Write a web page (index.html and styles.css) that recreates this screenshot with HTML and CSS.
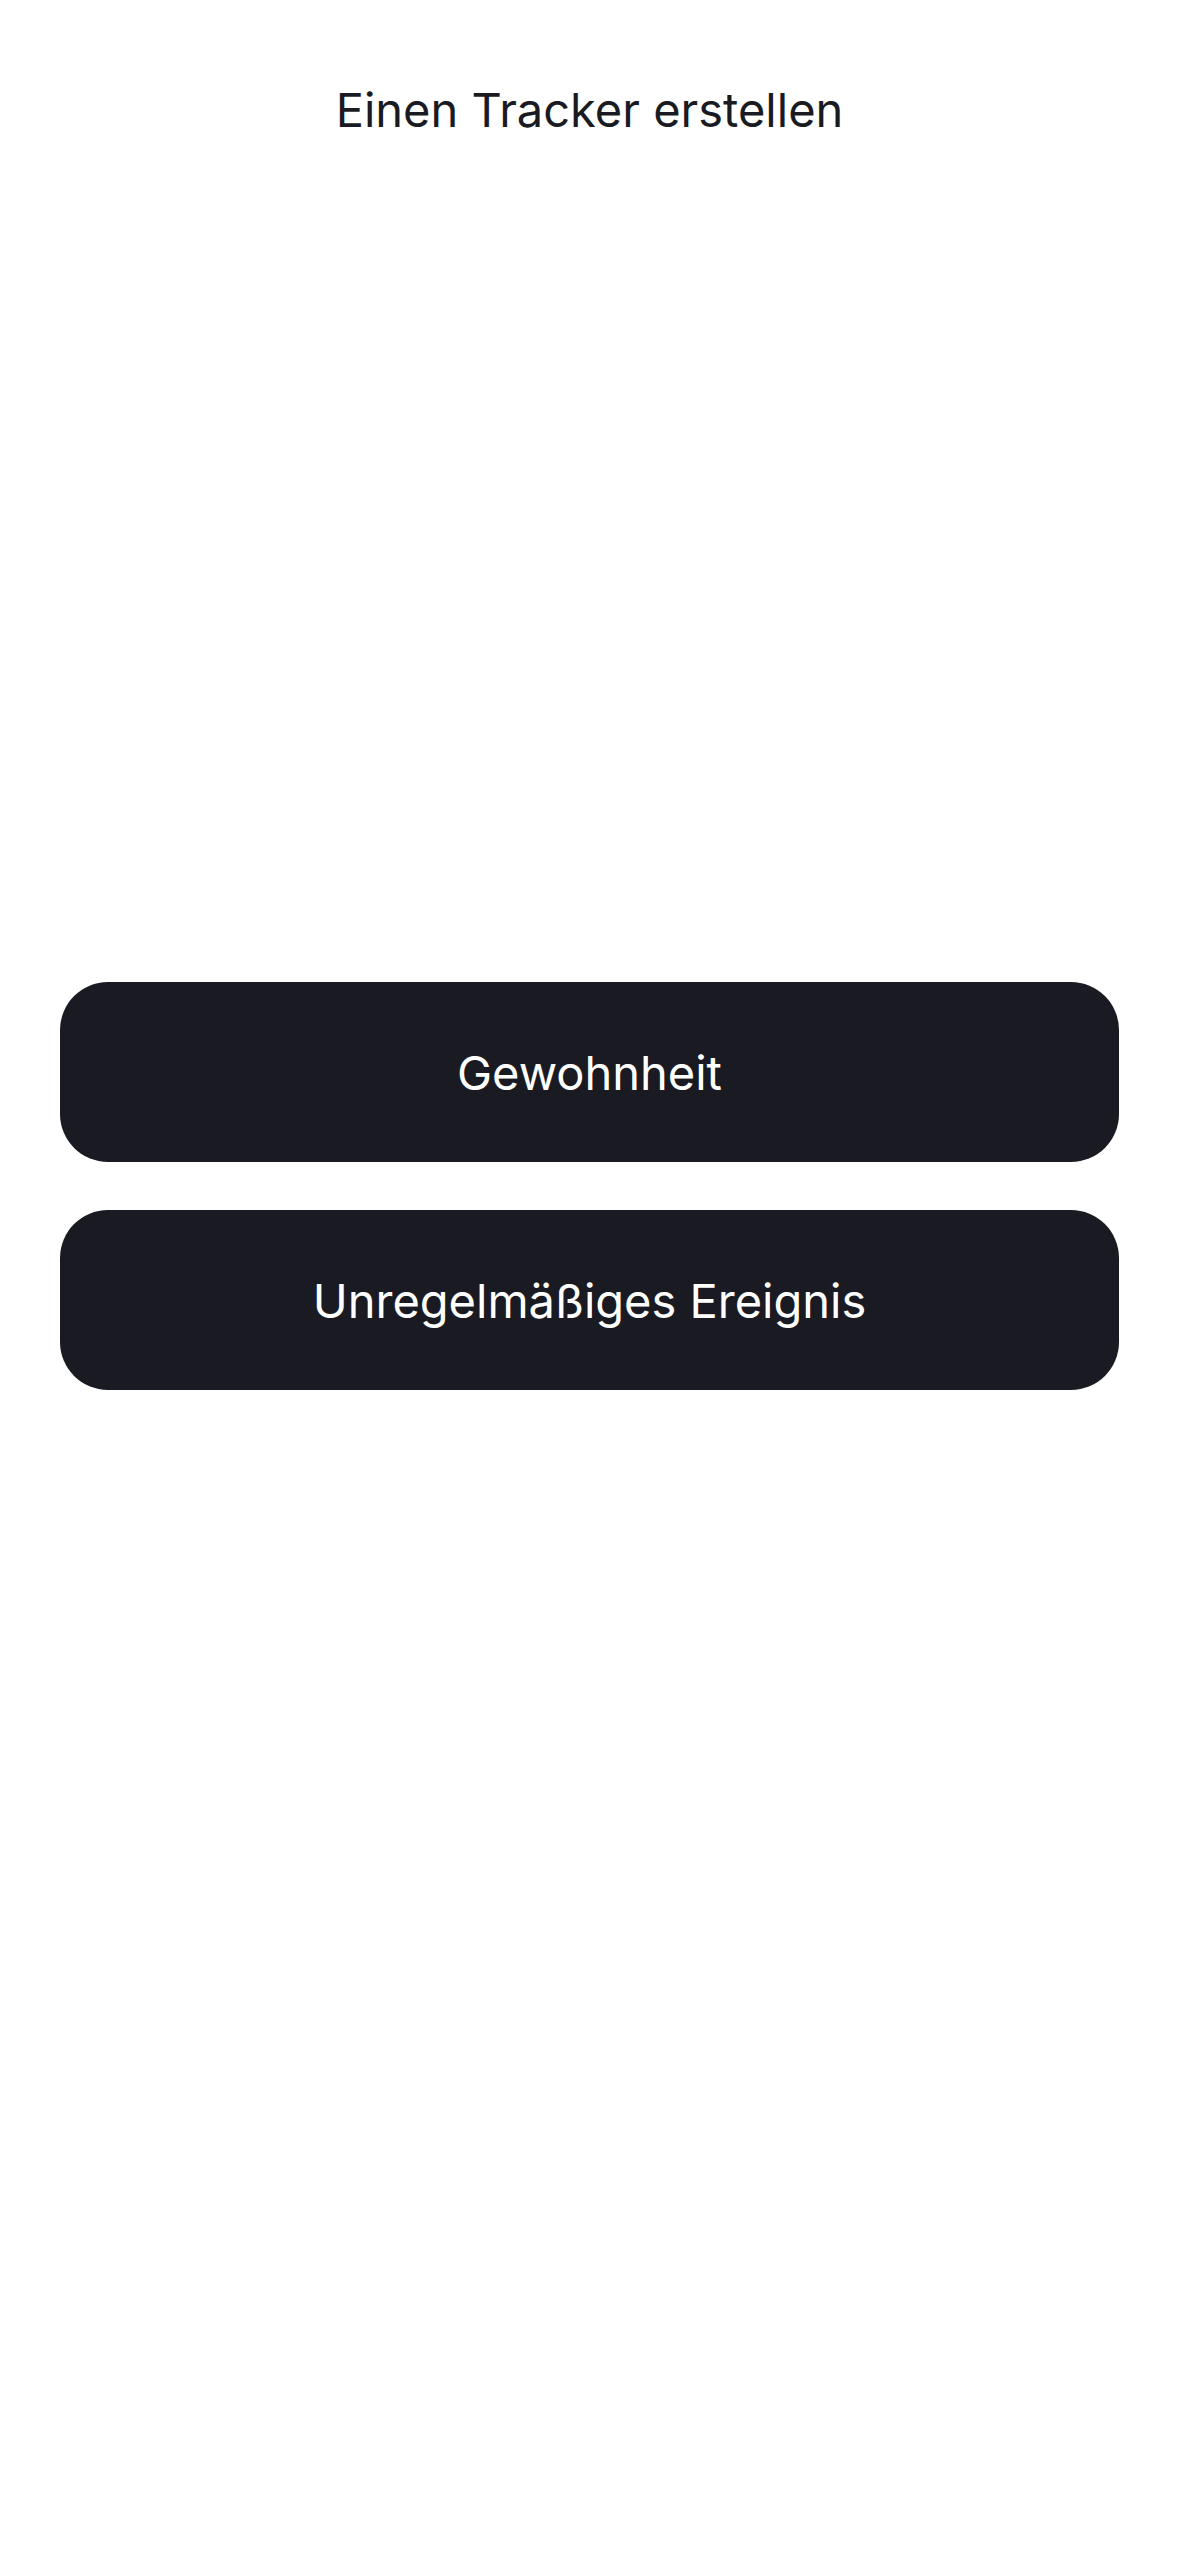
FILE: index.html
```html
<!DOCTYPE html>
<html lang="de">
<head>
<meta charset="utf-8">
<title>Einen Tracker erstellen</title>
<link rel="stylesheet" href="styles.css">
</head>
<body>
<div class="screen">
  <header class="nav">
    <h1 class="title">Einen Tracker erstellen</h1>
  </header>
  <main class="actions">
    <button class="action">Gewohnheit</button>
    <button class="action">Unregelmäßiges Ereignis</button>
  </main>
</div>
</body>
</html>
```

FILE: styles.css
```css
html, body {
  margin: 0;
  padding: 0;
  background: #ffffff;
}
body {
  font-family: Inter, "Noto Sans", "Liberation Sans", sans-serif;
  color: #1a1b22;
}
.screen {
  width: 1179px;
  height: 2556px;
  display: flex;
  flex-direction: column;
}
.nav {
  padding-top: 81px;
  display: flex;
  justify-content: center;
}
.title {
  margin: 0;
  font-size: 47px;
  line-height: 58px;
  font-weight: 400;
  color: #1a1b22;
}
.actions {
  margin-top: 843px;
  padding: 0 60px;
  display: flex;
  flex-direction: column;
  gap: 48px;
}
.action {
  height: 180px;
  border: none;
  border-radius: 48px;
  background: #1a1b22;
  color: #ffffff;
  font-family: Inter, "Noto Sans", "Liberation Sans", sans-serif;
  font-size: 47px;
  font-weight: 400;
  padding: 0;
  cursor: pointer;
}
```
